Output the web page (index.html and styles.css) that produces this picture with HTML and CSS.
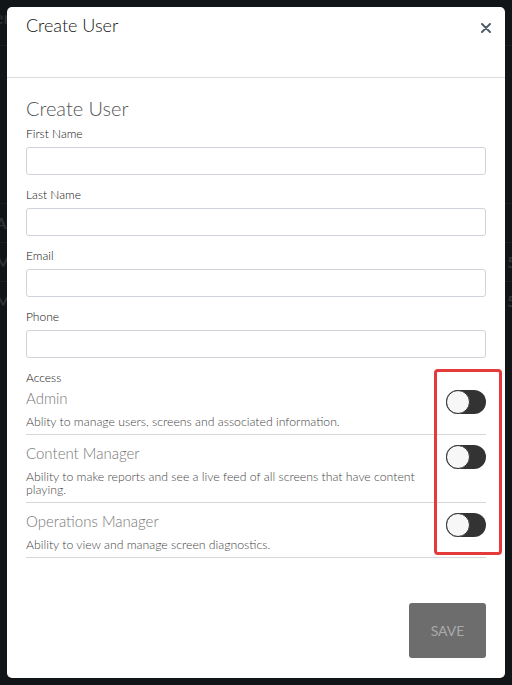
FILE: index.html
```html
<!DOCTYPE html>
<html>
<head>
<meta charset="utf-8">
<link rel="stylesheet" href="styles.css">
</head>
<body>
<div class="page">
  <div class="page-top"><span class="ghost">er</span></div>
  <div class="page-rows">
    <div class="page-row"><span class="ghost">Admin</span><span class="ghost"></span></div>
    <div class="page-row"><span class="ghost">Ma</span><span class="ghost">5</span></div>
    <div class="page-row"><span class="ghost">Ma</span><span class="ghost">5</span></div>
  </div>
</div>

<div class="modal">
  <div class="modal-header">
    <h1 class="modal-title">Create User</h1>
    <button class="close" aria-label="Close">
      <svg width="10" height="10" viewBox="0 0 10 10"><path d="M1 1L9 9M9 1L1 9" stroke="#4f5d6b" stroke-width="2" stroke-linecap="round"/></svg>
    </button>
  </div>
  <div class="modal-body">
    <h2 class="form-title">Create User</h2>
    <div class="field">
      <label class="label">First Name</label>
      <input class="input" type="text">
    </div>
    <div class="field">
      <label class="label">Last Name</label>
      <input class="input" type="text">
    </div>
    <div class="field">
      <label class="label">Email</label>
      <input class="input" type="text">
    </div>
    <div class="field">
      <label class="label">Phone</label>
      <input class="input" type="text">
    </div>
    <div class="access">
      <div class="label">Access</div>
      <div class="role role-first">
        <div class="role-text">
          <div class="role-name">Admin</div>
          <div class="role-desc">Ablity to manage users, screens and associated information.</div>
        </div>
        <span class="toggle"><span class="knob"></span></span>
      </div>
      <div class="role">
        <div class="role-text">
          <div class="role-name">Content Manager</div>
          <div class="role-desc">Ability to make reports and see a live feed of all screens that have content playing.</div>
        </div>
        <span class="toggle"><span class="knob"></span></span>
      </div>
      <div class="role">
        <div class="role-text">
          <div class="role-name">Operations Manager</div>
          <div class="role-desc">Ability to view and manage screen diagnostics.</div>
        </div>
        <span class="toggle"><span class="knob"></span></span>
      </div>
    </div>
    <div class="footer">
      <button class="save">SAVE</button>
    </div>
  </div>
  <div class="highlight"></div>
</div>
</body>
</html>
```

FILE: styles.css
```css
html, body {
  margin: 0;
  padding: 0;
}
body {
  background: #121518;
  font-family: Lato, "Open Sans", Arial, sans-serif;
  width: 512px;
  height: 685px;
  overflow: hidden;
  position: relative;
}
.page {
  color: #2f3338;
}
.page-top {
  height: 46px;
  border-bottom: 1px solid #1b1f23;
  display: flex;
  align-items: flex-start;
  padding-top: 6px;
  font-size: 18px;
  box-sizing: border-box;
}
.ghost { margin-left: -6px; }
.page-rows {
  margin-top: 157px;
}
.page-row {
  height: 38px;
  border-top: 1px solid #1b1f23;
  display: flex;
  justify-content: space-between;
  align-items: center;
  font-size: 15px;
  font-weight: 700;
  margin-right: -4px;
}
.page-row .ghost { margin-left: -4px; }

.modal {
  position: absolute;
  left: 7px;
  top: 7px;
  width: 498px;
  height: 671px;
  background: #fff;
  border-radius: 5px;
  box-sizing: border-box;
}
.modal-header {
  height: 71px;
  box-sizing: border-box;
  border-bottom: 1px solid #dcdcdc;
  display: flex;
  justify-content: space-between;
  align-items: flex-start;
  padding: 8px 19px 0 19px;
}
.modal-title {
  margin: 0;
  font-size: 18px;
  font-weight: 300;
  line-height: 20px;
  color: #111;
}
.close {
  border: 0;
  background: none;
  padding: 0;
  margin-top: 8px;
  margin-right: -5px;
  width: 10px;
  height: 10px;
  display: flex;
}
.modal-body {
  padding: 0 19px;
}
.form-title {
  margin: 18px 0 6px;
  font-size: 20px;
  font-weight: 300;
  line-height: 24px;
  color: #555;
}
.field {
  margin-bottom: 12px;
}
.label {
  display: block;
  font-size: 12px;
  font-weight: 300;
  line-height: 16px;
  color: #111;
  margin-bottom: 5px;
}
.input {
  display: block;
  width: 100%;
  box-sizing: border-box;
  height: 28px;
  border: 1px solid #cfd3da;
  border-radius: 3px;
  margin: 0;
  background: #fff;
}
.access .label {
  margin-bottom: 0;
}
.role {
  display: flex;
  justify-content: space-between;
  align-items: flex-start;
  padding: 8px 0 6px;
  border-bottom: 1px solid #d5d7db;
}
.role-first {
  padding-top: 2px;
}
.role-text {
  width: 410px;
}
.role-name {
  font-size: 15px;
  font-weight: 300;
  line-height: 20px;
  color: #777;
}
.role-desc {
  margin-top: 7px;
  font-size: 12.25px;
  font-weight: 300;
  line-height: 13px;
  color: #444;
}
.toggle {
  margin-top: 2px;
  width: 40px;
  height: 24px;
  border-radius: 12px;
  background: #333;
  position: relative;
  flex: none;
}
.knob {
  position: absolute;
  left: 0;
  top: 0;
  width: 24px;
  height: 24px;
  box-sizing: border-box;
  border-radius: 50%;
  background: #f7f7f7;
  border: 1.5px solid #333;
}
.footer {
  display: flex;
  justify-content: flex-end;
  padding-top: 45px;
}
.save {
  width: 77px;
  height: 55px;
  border: 0;
  border-radius: 3px;
  background: #6d6d6e;
  color: #a9a9a9;
  font-family: Lato, "Open Sans", Arial, sans-serif;
  font-size: 14px;
  font-weight: 400;
  padding: 0;
}
.highlight {
  position: absolute;
  left: 427px;
  top: 362px;
  width: 68px;
  height: 186px;
  box-sizing: border-box;
  border: 3px solid #e53a3a;
  border-radius: 4px;
}
```
